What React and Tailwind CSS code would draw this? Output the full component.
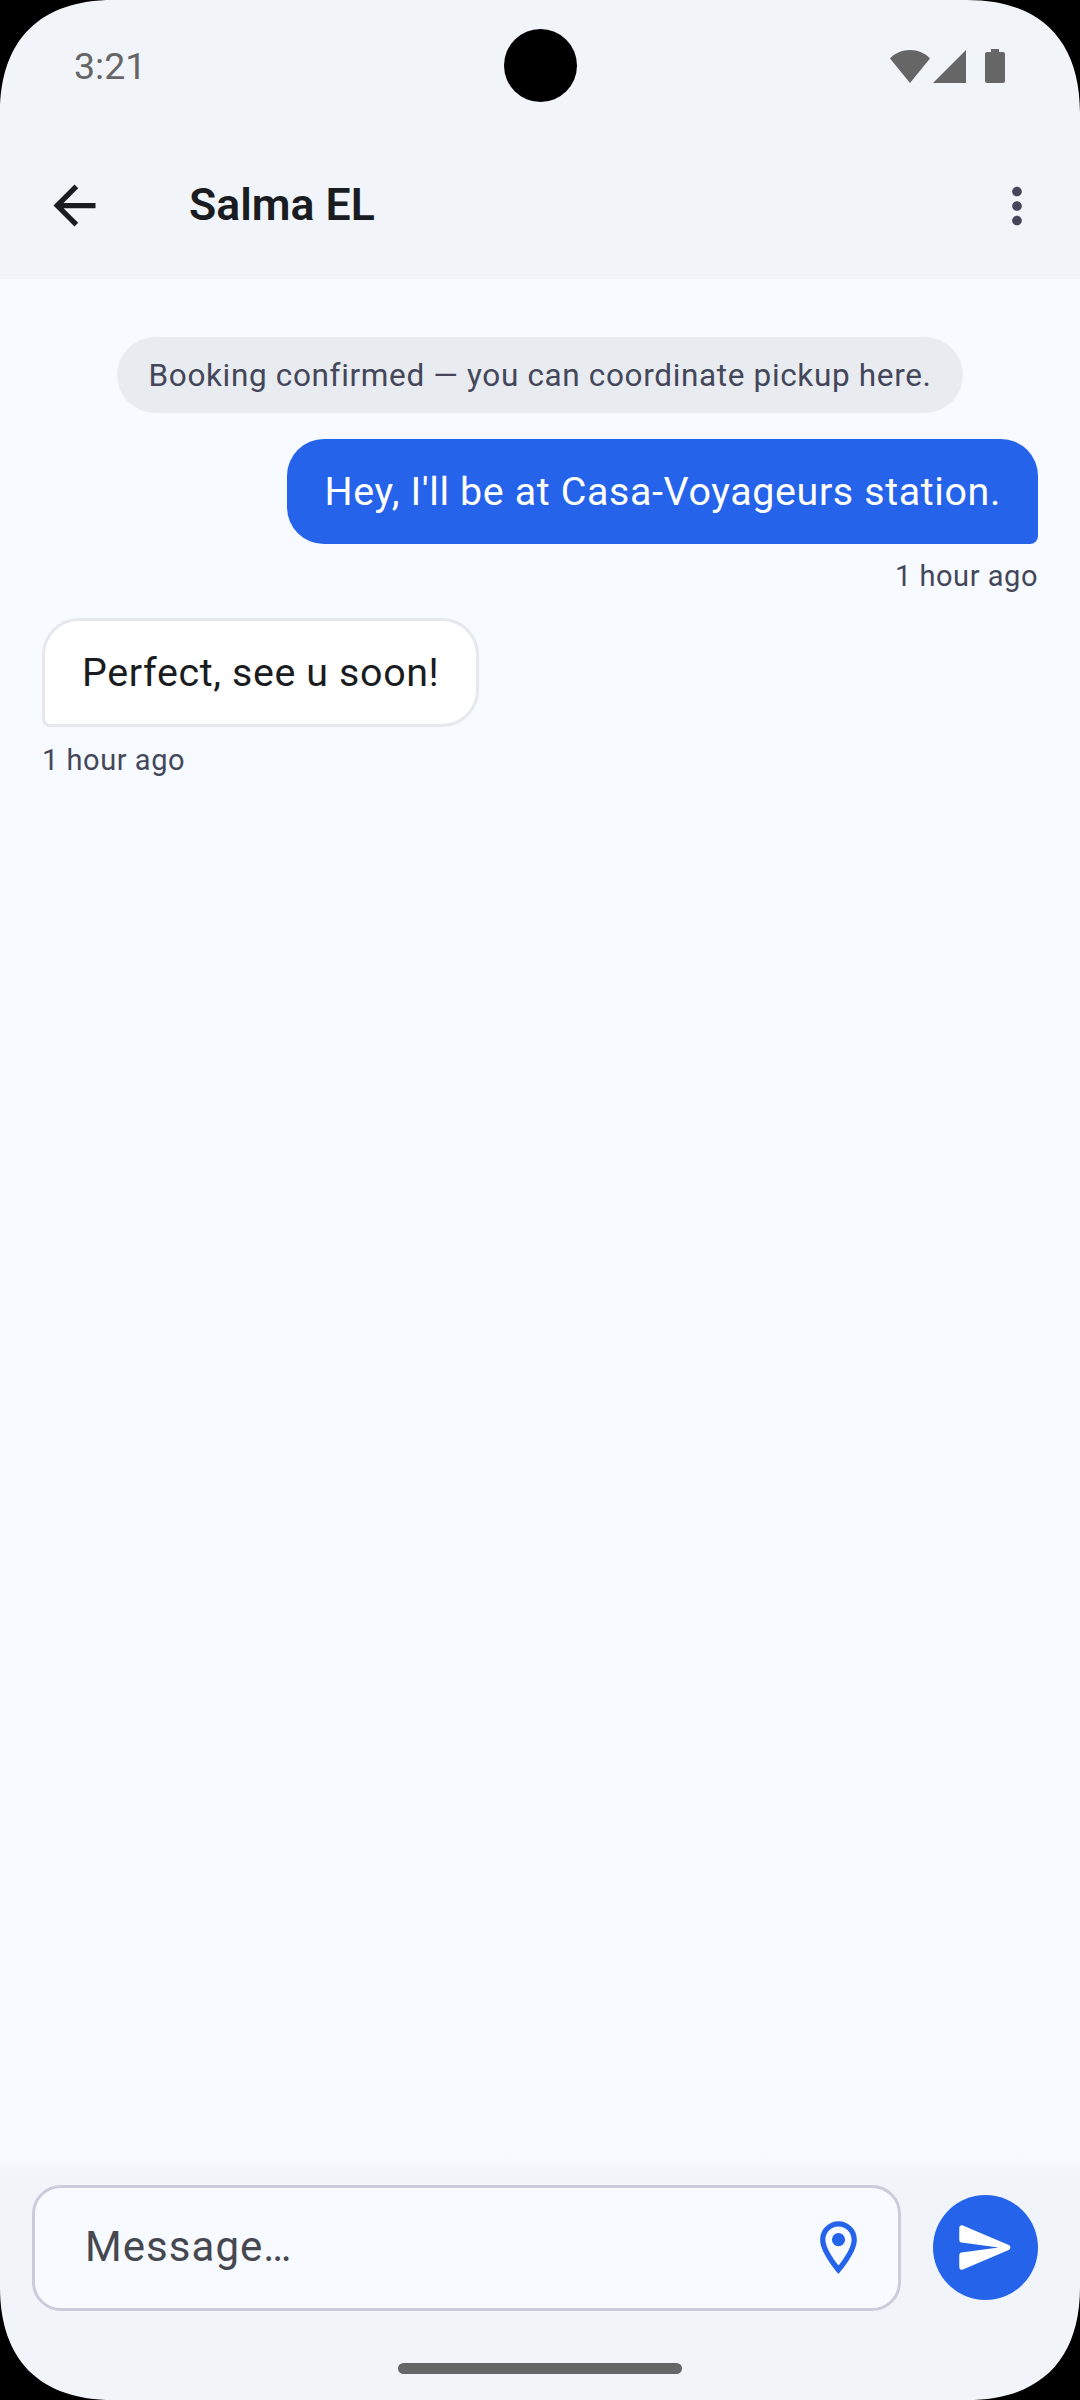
const CORNER = "M0 0H113C40 0 0 40 0 113Z";

export default function App() {
  return (
    <div className="relative w-[1080px] h-[2400px] overflow-hidden font-['Roboto',sans-serif]">
      <div className="w-full h-full bg-[#f7faff] flex flex-col">
        <header className="h-[279px] bg-[#f1f5f9] flex flex-col shrink-0">
          <div className="h-[132px] px-[74px] flex items-center justify-between">
            <span className="pt-[1px] text-[37.5px] leading-none text-[#666666]">3:21</span>
            <div className="flex items-center">
              <svg width="40" height="33" viewBox="0 0 40 33" className="fill-[#666666]"><path d="M0 8.5C5 3 12 0 20 0s15 3 20 8.5L20 33z" /></svg>
              <svg width="33" height="33" viewBox="0 0 33 33" className="ml-[3px] fill-[#666666]"><path d="M33 0v33H0z" /></svg>
              <svg width="20" height="34" viewBox="0 0 20 34" className="ml-[19px] mr-[1px] fill-[#666666]"><path d="M6 0h8v3h4a2 2 0 0 1 2 2v27a2 2 0 0 1-2 2H2a2 2 0 0 1-2-2V5a2 2 0 0 1 2-2h4z" /></svg>
            </div>
          </div>
          <div className="flex-1 flex items-center pl-[43px] pr-[34px]">
            <svg width="63" height="63" viewBox="0 0 24 24" className="fill-[#191c20] shrink-0"><path d="M20 11H7.83l5.59-5.59L12 4l-8 8 8 8 1.41-1.41L7.83 13H20v-2z" /></svg>
            <h1 className="ml-[83px] text-[44.6px] leading-none font-semibold text-[#191c20]">Salma EL</h1>
            <svg width="58" height="58" viewBox="0 0 24 24" className="ml-auto fill-[#44475a] shrink-0"><path d="M12 8c1.1 0 2-.9 2-2s-.9-2-2-2-2 .9-2 2 .9 2 2 2zm0 2c-1.1 0-2 .9-2 2s.9 2 2 2 2-.9 2-2-.9-2-2-2zm0 6c-1.1 0-2 .9-2 2s.9 2 2 2 2-.9 2-2-.9-2-2-2z" /></svg>
          </div>
        </header>

        <main className="flex-1 flex flex-col px-[42px] pt-[58px]">
          <div className="self-center h-[76px] px-[31.5px] pt-[2px] rounded-full bg-[#e8ebf0] flex items-center">
            <span className="text-[31.5px] tracking-[0.65px] text-[#44475a]">Booking confirmed — you can coordinate pickup here.</span>
          </div>
          <div className="self-end mt-[26px] h-[105px] px-[37px] flex items-center bg-[#2563eb] rounded-[37px] rounded-br-[8px]">
            <span className="text-[39.4px] tracking-[0.63px] text-white">Hey, I'll be at Casa-Voyageurs station.</span>
          </div>
          <span className="self-end mt-[14px] text-[29px] leading-[36px] tracking-[0.55px] text-[#44475a]">1 hour ago</span>
          <div className="self-start mt-[24px] h-[109px] px-[37px] flex items-center bg-white border-[3px] border-[#e5e8ed] rounded-[37px] rounded-bl-[8px]">
            <span className="text-[39.4px] tracking-[0.63px] text-[#191c20]">Perfect, see u soon!</span>
          </div>
          <span className="self-start mt-[15px] text-[29px] leading-[36px] tracking-[0.55px] text-[#44475a]">1 hour ago</span>
        </main>

        <footer className="shrink-0 bg-[#f1f5f9] flex flex-col">
          <div className="h-[14px] bg-gradient-to-b from-[#f7faff] to-[#f1f5f9]" />
          <div className="mt-[13px] flex items-center pl-[32px] pr-[42px] gap-[32px]">
            <div className="flex-1 h-[126px] rounded-[29px] border-[3px] border-[#cacCD9] bg-[#f7faff] flex items-center pl-[50px] pr-[28px]">
              <span className="mb-[3px] text-[42px] tracking-[1.05px] text-[#46474f]">Message…</span>
              <svg width="63" height="63" viewBox="0 0 24 24" className="ml-auto mb-[2px] fill-[#2563eb]"><path d="M12 2C8.13 2 5 5.13 5 9c0 5.25 7 13 7 13s7-7.75 7-13c0-3.87-3.13-7-7-7zM7 9c0-2.76 2.24-5 5-5s5 2.24 5 5c0 2.88-2.88 7.19-5 9.88C9.92 16.21 7 11.85 7 9z" /><circle cx="12" cy="9" r="2.5" /></svg>
            </div>
            <div className="mb-[1px] w-[105px] h-[105px] rounded-full bg-[#2563eb] flex items-center justify-center">
              <svg width="63" height="63" viewBox="0 0 24 24" className="fill-white"><path d="M3.4 20.4l17.45-7.48c.81-.35.81-1.49 0-1.84L3.4 3.6c-.66-.29-1.39.2-1.39.91L2 9.12c0 .5.37.93.87.99L17 12 2.87 13.88c-.5.07-.87.5-.87 1l.01 4.61c0 .71.73 1.2 1.39.91z" /></svg>
            </div>
          </div>
          <div className="self-center mt-[52px] mb-[26px] w-[284px] h-[11px] rounded-full bg-[#666666]" />
        </footer>
      </div>
      <div className="absolute left-[504px] top-[29px] w-[73px] h-[73px] rounded-full bg-black" />
      <svg width="113" height="113" viewBox="0 0 113 113" className="absolute left-0 top-0 fill-black"><path d={CORNER} /></svg>
      <svg width="113" height="113" viewBox="0 0 113 113" className="absolute right-0 top-0 rotate-90 fill-black"><path d={CORNER} /></svg>
      <svg width="113" height="113" viewBox="0 0 113 113" className="absolute right-0 bottom-0 rotate-180 fill-black"><path d={CORNER} /></svg>
      <svg width="113" height="113" viewBox="0 0 113 113" className="absolute left-0 bottom-0 -rotate-90 fill-black"><path d={CORNER} /></svg>
    </div>
  );
}
